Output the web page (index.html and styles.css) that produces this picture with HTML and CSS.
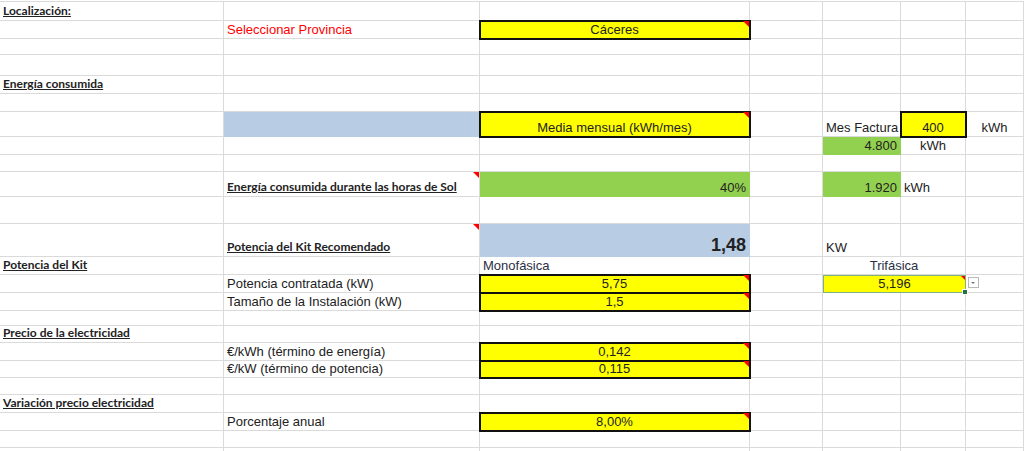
FILE: index.html
```html
<!DOCTYPE html>
<html lang="es">
<head>
<meta charset="utf-8">
<title>Kit solar</title>
<link rel="stylesheet" href="styles.css">
</head>
<body>
<div class="sheet">
  <!-- R1 -->
  <div class="c hd">Localización:</div><div class="c"></div><div class="c"></div><div class="c"></div><div class="c"></div><div class="c"></div><div class="c"></div>
  <!-- R2 -->
  <div class="c"></div><div class="c red">Seleccionar Provincia</div><div class="c y ctr note">Cáceres</div><div class="c"></div><div class="c"></div><div class="c"></div><div class="c"></div>
  <!-- R3 -->
  <div class="c"></div><div class="c"></div><div class="c"></div><div class="c"></div><div class="c"></div><div class="c"></div><div class="c"></div>
  <!-- R4 -->
  <div class="c"></div><div class="c"></div><div class="c"></div><div class="c"></div><div class="c"></div><div class="c"></div><div class="c"></div>
  <!-- R5 -->
  <div class="c hd">Energía consumida</div><div class="c"></div><div class="c"></div><div class="c"></div><div class="c"></div><div class="c"></div><div class="c"></div>
  <!-- R6 -->
  <div class="c"></div><div class="c"></div><div class="c"></div><div class="c"></div><div class="c"></div><div class="c"></div><div class="c"></div>
  <!-- R7 -->
  <div class="c"></div><div class="c b"></div><div class="c y ctr note">Media mensual (kWh/mes)</div><div class="c"></div><div class="c">Mes Factura</div><div class="c y ctr">400</div><div class="c ctr">kWh</div>
  <!-- R8 -->
  <div class="c"></div><div class="c"></div><div class="c"></div><div class="c"></div><div class="c g rt">4.800</div><div class="c ctr">kWh</div><div class="c"></div>
  <!-- R9 -->
  <div class="c"></div><div class="c"></div><div class="c"></div><div class="c"></div><div class="c"></div><div class="c"></div><div class="c"></div>
  <!-- R10 -->
  <div class="c"></div><div class="c hd note">Energía consumida durante las horas de Sol</div><div class="c g rt">40%</div><div class="c"></div><div class="c g rt">1.920</div><div class="c">kWh</div><div class="c"></div>
  <!-- R11 -->
  <div class="c"></div><div class="c"></div><div class="c"></div><div class="c"></div><div class="c"></div><div class="c"></div><div class="c"></div>
  <!-- R12 -->
  <div class="c"></div><div class="c hd note">Potencia del Kit Recomendado</div><div class="c b rt big">1,48</div><div class="c"></div><div class="c">KW</div><div class="c"></div><div class="c"></div>
  <!-- R13 -->
  <div class="c hd">Potencia del Kit</div><div class="c"></div><div class="c slate">Monofásica</div><div class="c"></div><div class="c span2 ctr slate">Trifásica</div><div class="c"></div>
  <!-- R14 -->
  <div class="c"></div><div class="c">Potencia contratada (kW)</div><div class="c y ctr note">5,75</div><div class="c"></div><div class="c span2 sel ctr">5,196</div><div class="c top"><span class="dd"></span></div>
  <!-- R15 -->
  <div class="c"></div><div class="c">Tamaño de la Instalación (kW)</div><div class="c y ctr note">1,5</div><div class="c"></div><div class="c"></div><div class="c"></div><div class="c"></div>
  <!-- R16 -->
  <div class="c"></div><div class="c"></div><div class="c"></div><div class="c"></div><div class="c"></div><div class="c"></div><div class="c"></div>
  <!-- R17 -->
  <div class="c hd">Precio de la electricidad</div><div class="c"></div><div class="c"></div><div class="c"></div><div class="c"></div><div class="c"></div><div class="c"></div>
  <!-- R18 -->
  <div class="c"></div><div class="c">€/kWh (término de energía)</div><div class="c y ctr note">0,142</div><div class="c"></div><div class="c"></div><div class="c"></div><div class="c"></div>
  <!-- R19 -->
  <div class="c"></div><div class="c">€/kW (término de potencia)</div><div class="c y ctr note">0,115</div><div class="c"></div><div class="c"></div><div class="c"></div><div class="c"></div>
  <!-- R20 -->
  <div class="c"></div><div class="c"></div><div class="c"></div><div class="c"></div><div class="c"></div><div class="c"></div><div class="c"></div>
  <!-- R21 -->
  <div class="c hd">Variación precio electricidad</div><div class="c"></div><div class="c"></div><div class="c"></div><div class="c"></div><div class="c"></div><div class="c"></div>
  <!-- R22 -->
  <div class="c"></div><div class="c">Porcentaje anual</div><div class="c y ctr note">8,00%</div><div class="c"></div><div class="c"></div><div class="c"></div><div class="c"></div>
  <!-- R23 -->
  <div class="c"></div><div class="c"></div><div class="c"></div><div class="c"></div><div class="c"></div><div class="c"></div><div class="c"></div>
  <!-- R24 -->
  <div class="c"></div><div class="c"></div><div class="c"></div><div class="c"></div><div class="c"></div><div class="c"></div><div class="c"></div>
</div>
</body>
</html>
```

FILE: styles.css
```css
html, body {
  margin: 0;
  padding: 0;
  background: #ffffff;
}

body {
  width: 1024px;
  height: 451px;
  overflow: hidden;
  font-family: "Liberation Sans", Arial, sans-serif;
  font-size: 13px;
  color: #222222;
}

.sheet {
  margin-top: 1px;
  border-top: 1px solid #dadada;
  display: grid;
  grid-template-columns: 224px 256px 270px 73px 78px 65px 58px;
  grid-template-rows: 19px 18px 16px 21px 18px 18px 25px 18px 17px 25px 27px 33px 18px 18px 18px 15px 17px 18px 17px 17px 18px 18px 17px 20px;
}

.c {
  box-sizing: border-box;
  border-right: 1px solid #dadada;
  border-bottom: 1px solid #dadada;
  display: flex;
  align-items: flex-end;
  padding: 0 3px 1px 3px;
  line-height: 15px;
  white-space: nowrap;
  overflow: visible;
  position: relative;
}

.hd {
  font-family: "Lato", "Liberation Sans", sans-serif;
  font-weight: 700;
  font-size: 12px;
  text-decoration: underline;
  text-underline-offset: 1px;
  color: #222222;
  padding-bottom: 2px;
}

.red {
  color: #ff0000;
}

.slate {
  color: #2a2f45;
}

.ctr {
  justify-content: center;
}

.rt {
  justify-content: flex-end;
}

.top {
  align-items: flex-start;
}

.y {
  background: #ffff00;
  outline: 2px solid #111111;
  outline-offset: -1px;
  z-index: 1;
}

.g {
  background: #92d050;
  border-color: #92d050;
}

.b {
  background: #b8cce4;
  border-color: #b8cce4;
}

.big {
  font-size: 18px;
  font-weight: 700;
  line-height: 20px;
}

.span2 {
  grid-column: span 2;
}

.sel {
  background: #ffff00;
  border: 1px solid #7fb07f;
  margin: 0 0 0 0;
}

.sel::before {
  content: "";
  position: absolute;
  right: -3px;
  bottom: -3px;
  width: 4px;
  height: 4px;
  background: #217346;
  border: 1px solid #ffffff;
  z-index: 2;
}

.sel::after {
  content: "";
  position: absolute;
  top: 0;
  right: 0;
  border-style: solid;
  border-width: 0 4px 4px 0;
  border-color: transparent #ff0000 transparent transparent;
}

.note::after {
  content: "";
  position: absolute;
  top: 0;
  right: 0;
  border-style: solid;
  border-width: 0 6px 6px 0;
  border-color: transparent #ff0000 transparent transparent;
}

.dd {
  display: block;
  box-sizing: border-box;
  width: 11px;
  height: 11px;
  margin: 2px 0 0 -1px;
  border: 1px solid #b9b9b9;
  background: #ffffff;
  position: relative;
}

.dd::after {
  content: "";
  position: absolute;
  left: 2px;
  top: 4px;
  border-style: solid;
  border-width: 2px 2.5px 0 2.5px;
  border-color: #777777 transparent transparent transparent;
}
```
